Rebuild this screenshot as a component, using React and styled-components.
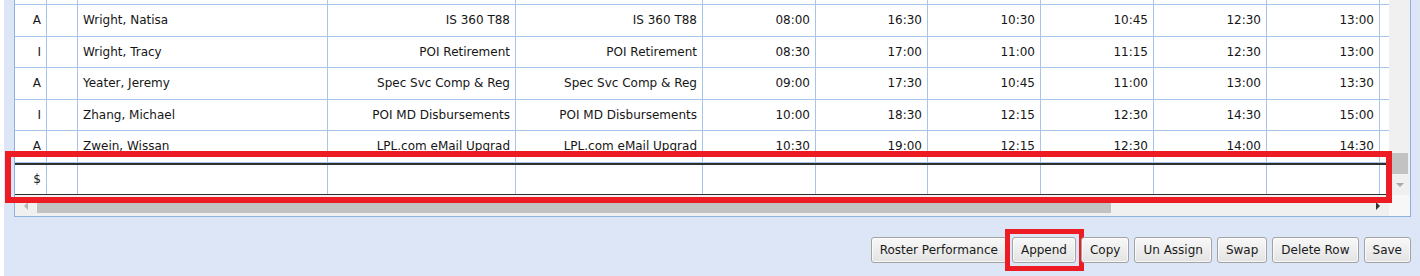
import React from "react";
import styled, { createGlobalStyle } from "styled-components";

const Global = createGlobalStyle`
  html, body { margin: 0; padding: 0; background: #ffffff; overflow: hidden; }
  body { font-family: "DejaVu Sans", "Liberation Sans", sans-serif; }
  #root { width: 1420px; height: 276px; }
`;

const Page = styled.div`
  width: 1420px;
  height: 276px;
  padding-left: 4px;
  box-sizing: border-box;
  background: #ffffff;
`;

const Panel = styled.div`
  position: relative;
  height: 100%;
  background: #dce6f7;
  padding: 0 9px 0 10px;
  box-sizing: border-box;
  display: flex;
  flex-direction: column;
`;

const GridFrame = styled.div`
  width: 1397px;
  box-sizing: border-box;
  border: 1px solid #8fb1df;
  border-top: none;
  display: grid;
  grid-template-columns: 1fr 21px;
  grid-template-rows: 195px 21px;
  background: #ffffff;
`;

const Body = styled.div`
  overflow: hidden;
  background: #ffffff;
`;

const Row = styled.div`
  display: flex;
  height: ${(p) => p.$h}px;
  box-sizing: border-box;
  border-bottom: 1px solid #a7c4ea;
`;

const NewRow = styled.div`
  display: flex;
  height: 33px;
  box-sizing: border-box;
  border-top: 2px solid #303030;
  border-bottom: 2px solid #303030;
`;

const Cell = styled.div`
  flex: 0 0 ${(p) => p.$w}px;
  width: ${(p) => p.$w}px;
  box-sizing: border-box;
  border-right: 1px solid #a7c4ea;
  display: flex;
  align-items: center;
  justify-content: ${(p) => (p.$align === "left" ? "flex-start" : "flex-end")};
  padding: 0 5px;
  font-size: 12px;
  color: #161616;
  white-space: nowrap;
  overflow: hidden;
`;

const FillCell = styled.div`
  flex: 1;
  background: #ffffff;
`;

const VScroll = styled.div`
  background: #f0f0f0;
  display: flex;
  flex-direction: column;
  justify-content: flex-end;
  align-items: stretch;
`;

const VThumb = styled.div`
  height: 21px;
  margin: 0 2px;
  background: #c2c2c2;
`;

const ArrowBox = styled.div`
  flex: 0 0 ${(p) => p.$size}px;
  height: ${(p) => (p.$vertical ? "21px" : "auto")};
  display: flex;
  align-items: center;
  justify-content: center;
`;

const HScroll = styled.div`
  background: #f0f0f0;
  display: flex;
  align-items: center;
`;

const HThumb = styled.div`
  flex: 0 0 1074px;
  height: 15px;
  background: #c2c2c2;
`;

const Spacer = styled.div`
  flex: 1;
`;

const Corner = styled.div`
  background: #f7f7f7;
`;

const Toolbar = styled.div`
  margin-top: 20px;
  width: 1397px;
  display: flex;
  justify-content: flex-end;
  gap: 5px;
`;

const Button = styled.button`
  position: relative;
  height: 26px;
  padding: 0 8px;
  font-family: "DejaVu Sans", "Liberation Sans", sans-serif;
  font-size: 12px;
  color: #1a1a1a;
  background: linear-gradient(#f8f8f8, #e3e3e3);
  border: 1px solid #a3a3a3;
  border-radius: 3px;
  box-shadow: inset 0 0 0 1px rgba(255, 255, 255, 0.7);
  white-space: nowrap;
  cursor: default;
  ${(p) =>
    p.$highlight &&
    `
    &::after {
      content: "";
      position: absolute;
      left: -8px;
      right: -9px;
      top: -9px;
      bottom: -9px;
      border: 5px solid #ed1c24;
      pointer-events: none;
    }
  `}
`;

const RedBox = styled.div`
  position: absolute;
  left: 1px;
  top: 151px;
  width: 1387px;
  height: 52px;
  box-sizing: border-box;
  border: 6px solid #ed1c24;
  pointer-events: none;
`;

const widths = [32, 31, 250, 188, 187, 113, 112, 113, 113, 113, 113];
const aligns = ["right", "right", "left", "right", "right", "right", "right", "right", "right", "right", "right"];

const rows = [
  ["A", "", "Wright, Natisa", "IS 360 T88", "IS 360 T88", "08:00", "16:30", "10:30", "10:45", "12:30", "13:00"],
  ["I", "", "Wright, Tracy", "POI Retirement", "POI Retirement", "08:30", "17:00", "11:00", "11:15", "12:30", "13:00"],
  ["A", "", "Yeater, Jeremy", "Spec Svc Comp & Reg", "Spec Svc Comp & Reg", "09:00", "17:30", "10:45", "11:00", "13:00", "13:30"],
  ["I", "", "Zhang, Michael", "POI MD Disbursements", "POI MD Disbursements", "10:00", "18:30", "12:15", "12:30", "14:30", "15:00"],
  ["A", "", "Zwein, Wissan", "LPL.com eMail Upgrad", "LPL.com eMail Upgrad", "10:30", "19:00", "12:15", "12:30", "14:00", "14:30"],
];

const Tri = ({ dir, color }) => {
  const pts = {
    left: "5,0 5,8 1,4",
    right: "1,0 1,8 5,4",
    down: "0,1 8,1 4,5",
  }[dir];
  return (
    <svg width={dir === "down" ? 8 : 6} height={dir === "down" ? 6 : 8} viewBox={dir === "down" ? "0 0 8 6" : "0 0 6 8"}>
      <polygon points={pts} fill={color} />
    </svg>
  );
};

const buttons = ["Roster Performance", "Append", "Copy", "Un Assign", "Swap", "Delete Row", "Save"];

export default function App() {
  return (
    <Page>
      <Global />
      <Panel>
        <GridFrame>
          <Body>
            <Row $h={5}>
              {widths.map((w, i) => (
                <Cell key={i} $w={w} $align={aligns[i]} />
              ))}
              <FillCell />
            </Row>
            {rows.map((r, ri) => (
              <Row key={ri} $h={31.5}>
                {r.map((v, i) => (
                  <Cell key={i} $w={widths[i]} $align={aligns[i]}>
                    {v}
                  </Cell>
                ))}
                <FillCell />
              </Row>
            ))}
            <NewRow>
              {widths.map((w, i) => (
                <Cell key={i} $w={w} $align={aligns[i]}>
                  {i === 0 ? "$" : ""}
                </Cell>
              ))}
              <FillCell />
            </NewRow>
          </Body>
          <VScroll>
            <VThumb />
            <ArrowBox $size={21} $vertical>
              <Tri dir="down" color="#a8a8a8" />
            </ArrowBox>
          </VScroll>
          <HScroll>
            <ArrowBox $size={22}>
              <Tri dir="left" color="#b5b5b5" />
            </ArrowBox>
            <HThumb />
            <Spacer />
            <ArrowBox $size={22}>
              <Tri dir="right" color="#333333" />
            </ArrowBox>
          </HScroll>
          <Corner />
        </GridFrame>
        <Toolbar>
          {buttons.map((b) => (
            <Button key={b} $highlight={b === "Append"}>
              {b}
            </Button>
          ))}
        </Toolbar>
        <RedBox />
      </Panel>
    </Page>
  );
}
